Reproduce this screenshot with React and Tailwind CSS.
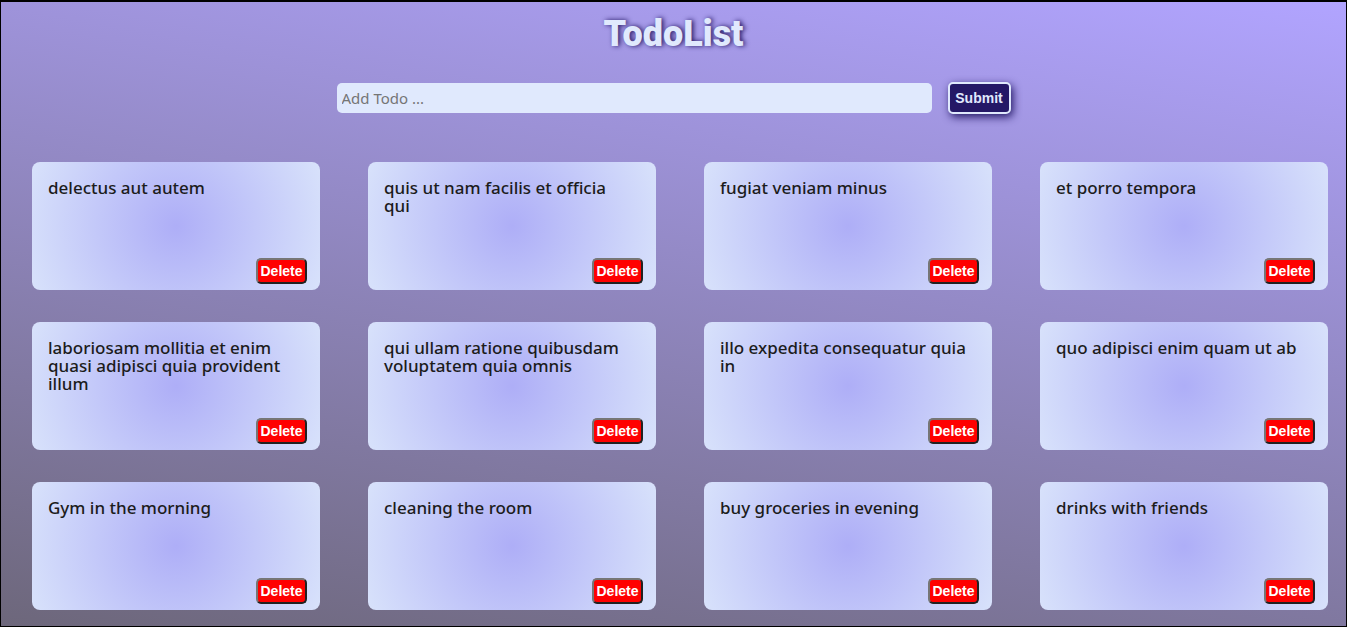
import { useState } from "react";

const initialTodos = [
  "delectus aut autem",
  "quis ut nam facilis et officia qui",
  "fugiat veniam minus",
  "et porro tempora",
  "laboriosam mollitia et enim quasi adipisci quia provident illum",
  "qui ullam ratione quibusdam voluptatem quia omnis",
  "illo expedita consequatur quia in",
  "quo adipisci enim quam ut ab",
  "Gym in the morning",
  "cleaning the room",
  "buy groceries in evening",
  "drinks with friends",
].map((title, index) => ({ id: index + 1, title }));

function TodoForm({ onAdd }) {
  const [title, setTitle] = useState("");

  function handleSubmit(event) {
    event.preventDefault();
    if (!title.trim()) return;
    onAdd(title.trim());
    setTitle("");
  }

  return (
    <form onSubmit={handleSubmit} className="mx-auto mt-7 flex w-[674px] max-w-full items-center gap-4">
      <input
        type="text"
        aria-label="Add Todo"
        placeholder="Add Todo ..."
        value={title}
        onChange={(event) => setTitle(event.target.value)}
        className="h-[30px] min-w-0 flex-1 rounded-[5px] bg-[#e0e9fd] px-[5px] text-[15px] text-[#1c1c1c] outline-none placeholder:text-[#757575]"
      />
      <button
        type="submit"
        className="h-8 w-[63px] rounded-[5px] border-2 border-[#e0e9fd] bg-[#241866] text-center font-['Liberation_Sans',sans-serif] text-sm font-bold text-[#e0e9fd] shadow-[2px_3px_8px_#241866]"
      >
        Submit
      </button>
    </form>
  );
}

function TodoCard({ todo, onDelete }) {
  return (
    <li className="flex min-h-32 flex-col justify-between rounded-lg bg-[radial-gradient(circle,#aeaef7_0%,#d8e2fb_100%)] pt-[17px] pr-[13px] pb-1.5 pl-4">
      <p className="pr-2.5 text-[17px] leading-[18px] font-medium text-[#1c1c1c]">{todo.title}</p>
      <button
        type="button"
        onClick={() => onDelete(todo.id)}
        className="h-[26px] w-[51px] self-end rounded-[5px] border-2 border-t-[#767676] border-r-[#212121] border-b-[#212121] border-l-[#767676] bg-[#ff0000] text-center font-['Liberation_Sans',sans-serif] text-sm leading-none font-bold text-white"
      >
        Delete
      </button>
    </li>
  );
}

export default function App() {
  const [todos, setTodos] = useState(initialTodos);

  function addTodo(title) {
    setTodos((current) => [...current, { id: Date.now(), title }]);
  }

  function deleteTodo(id) {
    setTodos((current) => current.filter((todo) => todo.id !== id));
  }

  return (
    <main className="min-h-screen border border-t-2 border-black bg-[linear-gradient(190deg,#b1a4ff_0%,#6d677b_100%)] pb-4 font-['Noto_Sans','Open_Sans',sans-serif]">
      <h1 className="pt-3 text-center font-['Roboto',sans-serif] text-4xl font-black text-[#e0e9fd] [text-shadow:2px_0_5px_#241866]">
        TodoList
      </h1>
      <TodoForm onAdd={addTodo} />
      <ul className="mt-12 grid grid-cols-4 gap-x-12 gap-y-8 pr-[18px] pl-[31px]">
        {todos.map((todo) => (
          <TodoCard key={todo.id} todo={todo} onDelete={deleteTodo} />
        ))}
      </ul>
    </main>
  );
}
